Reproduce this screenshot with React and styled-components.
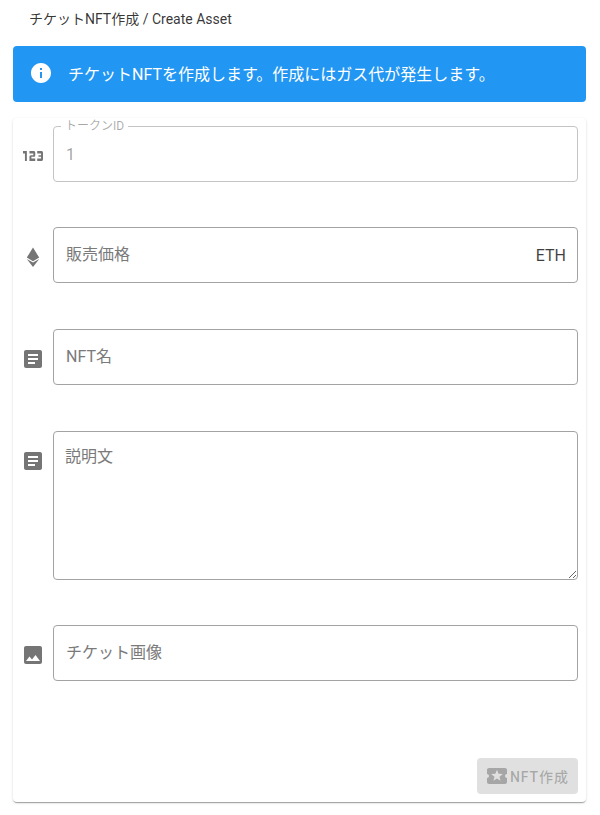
import React from "react";
import styled, { createGlobalStyle } from "styled-components";

const GlobalStyle = createGlobalStyle`
  body {
    margin: 0;
    background: #fff;
    font-family: Roboto, "Noto Sans CJK JP", sans-serif;
    color: rgba(0, 0, 0, 0.87);
  }
`;

const Page = styled.div`
  padding: 11px 14px 13px 13px;
`;

const Title = styled.h1`
  margin: 0 0 18px 16px;
  font-size: 14px;
  line-height: 17px;
  font-weight: 400;
  color: rgba(0, 0, 0, 0.8);
`;

const Alert = styled.div`
  display: flex;
  align-items: center;
  gap: 15px;
  height: 56px;
  padding: 0 16px 2px;
  margin-bottom: 16px;
  background: #2196f3;
  border-radius: 4px;
  color: #fff;
  font-size: 16px;
  font-weight: 400;
  box-sizing: border-box;
`;

const Card = styled.div`
  display: flex;
  flex-direction: column;
  height: 684px;
  padding: 8px;
  box-sizing: border-box;
  background: #fff;
  border-radius: 4px;
  box-shadow: 0 2px 1px -1px rgba(0, 0, 0, 0.2), 0 1px 1px 0 rgba(0, 0, 0, 0.14), 0 1px 3px 0 rgba(0, 0, 0, 0.12);
`;

const Row = styled.div`
  display: flex;
  align-items: flex-start;
  gap: 8px;
  margin-bottom: ${(p) => p.$after}px;
`;

const IconSlot = styled.div`
  flex: none;
  width: 24px;
  height: 24px;
  margin-top: 18px;
  color: #757575;
  & svg {
    display: block;
  }
`;

const Field = styled.div`
  position: relative;
  flex: 1;
  display: flex;
  align-items: center;
  height: 56px;
  padding: 0 11px 0 12px;
  box-sizing: border-box;
  background: #fff;
  border: 1px solid ${(p) => (p.$disabled ? "#c4c4c4" : "#a3a3a3")};
  border-radius: 4px;
  font-size: 16px;
`;

const Input = styled.input`
  flex: 1;
  min-width: 0;
  padding: 0;
  border: 0;
  outline: 0;
  background: transparent;
  font: inherit;
  color: rgba(0, 0, 0, 0.38);
  -webkit-text-fill-color: rgba(0, 0, 0, 0.38);
`;

const Label = styled.label`
  position: absolute;
  left: 12px;
  top: ${(p) => p.$top || 16}px;
  line-height: 22px;
  color: #7a7a7a;
  pointer-events: none;
`;

const ShrunkLabel = styled.label`
  position: absolute;
  left: 7px;
  top: -8px;
  padding: 0 4px;
  background: #fff;
  font-size: 12px;
  line-height: 15px;
  color: rgba(0, 0, 0, 0.34);
`;

const Suffix = styled.span`
  flex: none;
  color: rgba(0, 0, 0, 0.75);
`;

const TextareaWrap = styled.div`
  position: relative;
  flex: 1;
  display: flex;
  font-size: 16px;
`;

const Textarea = styled.textarea`
  flex: 1;
  display: block;
  height: 149px;
  margin: 0;
  padding: 14px 12px;
  box-sizing: border-box;
  border: 1px solid #a3a3a3;
  border-radius: 4px;
  outline: 0;
  font: inherit;
  resize: vertical;
`;

const Actions = styled.div`
  margin-top: auto;
  display: flex;
  justify-content: flex-end;
`;

const Button = styled.button`
  display: flex;
  align-items: center;
  gap: 1px;
  width: 101px;
  height: 36px;
  padding: 0 8px;
  box-sizing: border-box;
  border: 0;
  border-radius: 4px;
  background: rgba(0, 0, 0, 0.12);
  color: rgba(0, 0, 0, 0.26);
  font-family: inherit;
  font-size: 14px;
  font-weight: 500;
  letter-spacing: 0.9px;
`;

const Icon = ({ d, transform }) => (
  <svg width="24" height="24" viewBox="0 0 24 24" fill="currentColor">
    <path d={d} transform={transform} />
  </svg>
);

const INFO = "M12 2C6.48 2 2 6.48 2 12s4.48 10 10 10 10-4.48 10-10S17.52 2 12 2zm1 15h-2v-6h2v6zm0-8h-2V7h2v2z";
const NUMBERS = "M7 15H5.5v-4.5H4V9h3v6zm6.5-1.5h-3v-1h2c.55 0 1-.45 1-1V10c0-.55-.45-1-1-1H9v1.5h3v1h-2c-.55 0-1 .45-1 1V15h4.5v-1.5zm6 .5v-4c0-.55-.45-1-1-1H15v1.5h3v1h-2v1h2v1h-3V15h3.5c.55 0 1-.45 1-1z";
const ETH = "M12 2.5 5.8 12.6 12 16.2l6.2-3.6L12 2.5zM5.8 14 12 22l6.2-8-6.2 3.6L5.8 14z";
const ARTICLE = "M19 3H5c-1.1 0-2 .9-2 2v14c0 1.1.9 2 2 2h14c1.1 0 2-.9 2-2V5c0-1.1-.9-2-2-2zm-5 14H7v-2h7v2zm3-4H7v-2h10v2zm0-4H7V7h10v2z";
const IMAGE = "M21 19V5c0-1.1-.9-2-2-2H5c-1.1 0-2 .9-2 2v14c0 1.1.9 2 2 2h14c1.1 0 2-.9 2-2zM8.5 13.5l2.5 3.01L14.5 12l4.5 6H5l3.5-4.5z";
const TICKET = "M20 12c0-1.1.9-2 2-2V6c0-1.1-.9-2-2-2H4c-1.1 0-1.99.9-1.99 2v4c1.1 0 1.99.9 1.99 2s-.89 2-2 2v4c0 1.1.9 2 2 2h16c1.1 0 2-.9 2-2v-4c-1.1 0-2-.9-2-2zm-4.42 4.8L12 14.5l-3.58 2.3 1.08-4.12-3.29-2.69 4.24-.25L12 5.8l1.54 3.95 4.24.25-3.29 2.69 1.09 4.11z";

export default function App() {
  return (
    <Page>
      <GlobalStyle />
      <Title>チケットNFT作成 / Create Asset</Title>
      <Alert>
        <Icon d={INFO} />
        チケットNFTを作成します。作成にはガス代が発生します。
      </Alert>
      <Card>
        <Row $after={45}>
          <IconSlot><Icon d={NUMBERS} transform="translate(12 12) scale(1.29 1.67) translate(-11.75 -12)" /></IconSlot>
          <Field $disabled>
            <ShrunkLabel>トークンID</ShrunkLabel>
            <Input disabled defaultValue="1" />
          </Field>
        </Row>
        <Row $after={46}>
          <IconSlot><Icon d={ETH} /></IconSlot>
          <Field>
            <Label>販売価格</Label>
            <Input />
            <Suffix>ETH</Suffix>
          </Field>
        </Row>
        <Row $after={46}>
          <IconSlot><Icon d={ARTICLE} /></IconSlot>
          <Field>
            <Label>NFT名</Label>
            <Input />
          </Field>
        </Row>
        <Row $after={45}>
          <IconSlot><Icon d={ARTICLE} /></IconSlot>
          <TextareaWrap>
            <Label $top={15}>説明文</Label>
            <Textarea />
          </TextareaWrap>
        </Row>
        <Row $after={0}>
          <IconSlot><Icon d={IMAGE} /></IconSlot>
          <Field>
            <Label>チケット画像</Label>
            <Input />
          </Field>
        </Row>
        <Actions>
          <Button disabled>
            <Icon d={TICKET} />
            NFT作成
          </Button>
        </Actions>
      </Card>
    </Page>
  );
}
